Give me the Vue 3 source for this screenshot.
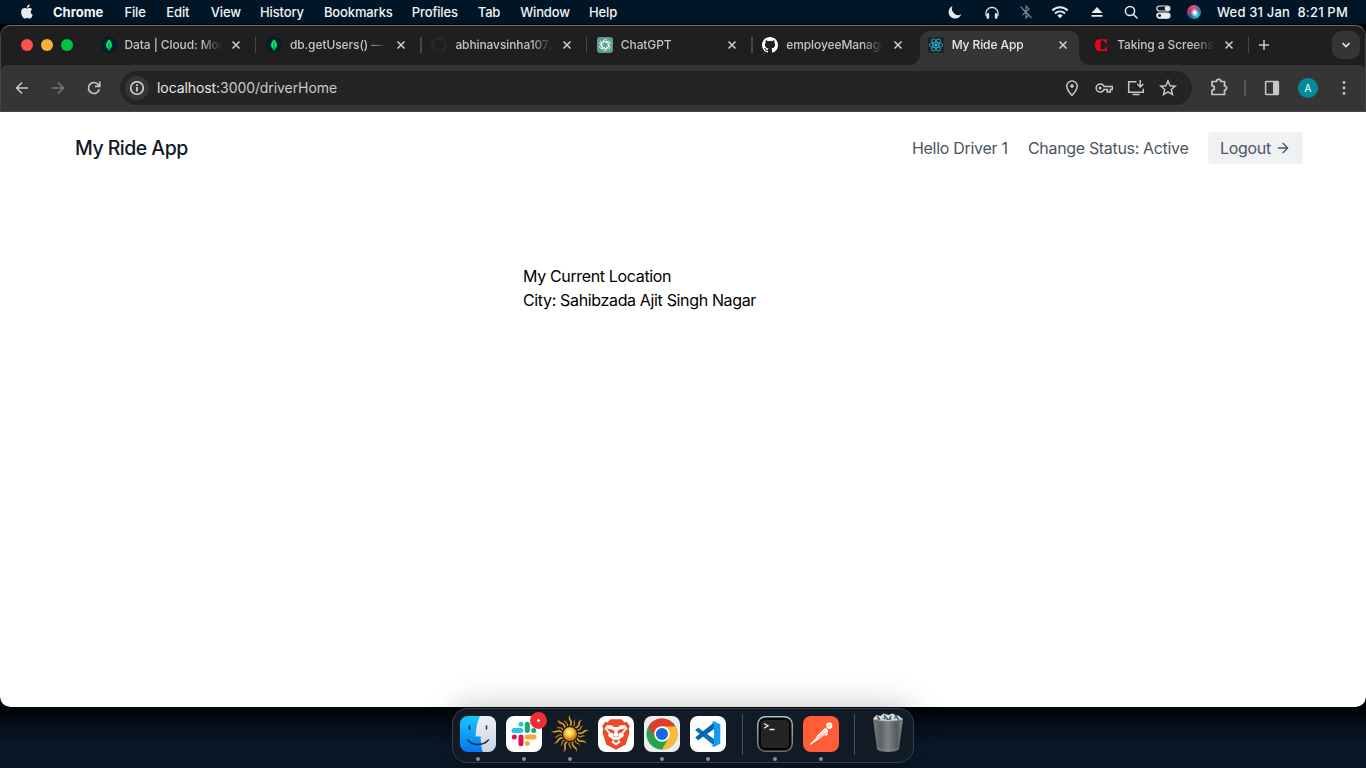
<script setup>
const menu = [
  ['Chrome', 51], ['File', 21.5], ['Edit', 24], ['View', 29], ['History', 43.5], ['Bookmarks', 67.5],
  ['Profiles', 45.5], ['Tab', 22], ['Window', 48.5], ['Help', 28]
]
const tabs = [
  { icon: 'mongo', title: 'Data | Cloud: Mon' },
  { icon: 'mongo', title: 'db.getUsers() —' },
  { icon: 'github', title: 'abhinavsinha107/', dark: true },
  { icon: 'gpt', title: 'ChatGPT' },
  { icon: 'github', title: 'employeeManage' },
  { icon: 'react', title: 'My Ride App', active: true },
  { icon: 'c', title: 'Taking a Screens' }
]
const rays = Array.from({ length: 18 }, (_, i) => i * 20)
const petals = [0, 60, 120, 180, 240, 300]
</script>

<template>
  <div class="desktop">
    <header class="menubar">
      <svg class="apple" viewBox="0 0 24 24"><path d="M18.7 12.7c0-2.5 2-3.7 2.1-3.8-1.200-1.700-3-1.900-3.600-2-1.500-.15-3 .9-3.800.9-.8 0-2-.9-3.300-.9-1.700 0-3.300 1-4.150 2.500-1.800 3.100-.45 7.600 1.250 10.100.85 1.200 1.850 2.600 3.200 2.550 1.300-.05 1.800-.8 3.300-.8 1.550 0 2 .8 3.350.8 1.400 0 2.250-1.250 3.100-2.450 1-1.400 1.350-2.800 1.400-2.850-.05 0-2.800-1.100-2.850-4.050zM16.200 5.300c.7-.85 1.150-2 1-3.200-1 .05-2.200.65-2.900 1.500-.65.75-1.200 1.950-1.050 3.100 1.100.1 2.250-.55 2.950-1.400z" /></svg>
      <nav><span v-for="(m, i) in menu" :key="m[0]" :class="{ bold: i === 0 }" :style="{ width: m[1] + 'px' }">{{ m[0] }}</span></nav>
      <div class="status">
        <svg width="14" height="14" viewBox="0 0 14 14"><path fill="#e6e9ec" d="M4.600 1A6.500 6.500 0 1 0 13.200 9.300 6.300 6.300 0 0 1 4.600 1z" /></svg>
        <svg width="14" height="14" viewBox="0 0 14 14" fill="none" stroke="#dfe3e7" stroke-width="1.200"><path d="M1.700 11.500A6.100 6.100 0 1 1 12.300 11.500" /><path d="M2.900 9.200v3.400M11.100 9.200v3.400" stroke-width="2.600" stroke-linecap="round" /></svg>
        <svg width="12" height="14" viewBox="0 0 12 14" fill="none" stroke="#7b8792" stroke-width="1.100"><path d="M2.500 4l6.500 6-3 3V1l3 3-6.500 6M.5 1.500l11 11.500" /></svg>
        <svg width="18" height="14" viewBox="0 0 18 14" fill="none" stroke="#e9ecef" stroke-width="1.900"><path d="M1.300 5.500a10.800 10.800 0 0 1 15.400 0M4 8.500a7 7 0 0 1 10 0" /><path fill="#e9ecef" stroke="none" d="M9 13.200L6.300 10.500a3.800 3.800 0 0 1 5.400 0z" /></svg>
        <svg width="12" height="12" viewBox="0 0 12 12" fill="#e9ecef"><path d="M6 1l5.500 6H.5zM.5 9h11v1.800H.5z" /></svg>
        <svg width="14" height="14" viewBox="0 0 14 14" fill="none" stroke="#e9ecef" stroke-width="1.500"><circle cx="6" cy="6" r="4.600" /><path d="M9.300 9.300L13 13" stroke-linecap="round" /></svg>
        <svg width="15" height="14" viewBox="0 0 15 14" fill="none" stroke="#e9ecef" stroke-width="1.200"><rect x=".8" y="1" width="13.200" height="5" rx="2.500" /><circle cx="11" cy="3.500" r="1.700" fill="#e9ecef" /><rect x=".8" y="8" width="13.200" height="5.200" rx="2.600" fill="#e9ecef" /><circle cx="3.600" cy="10.600" r="1.500" fill="#10202e" stroke="none" /></svg>
        <i class="siri"></i>
      </div>
      <span class="clock">Wed 31 Jan&nbsp; 8:21 PM</span>
    </header>

    <main class="window">
      <div class="tabstrip">
        <div class="lights"><i></i><i></i><i></i></div>
        <div class="tabs">
          <div v-for="(t, i) in tabs" :key="t.title" class="tab" :class="{ active: t.active, before: i === 4 }">
            <svg class="fav" viewBox="0 0 16 16">
              <g v-if="t.icon === 'mongo'"><circle cx="8" cy="8" r="8" fill="#001e2b" /><path d="M8 2.200c3.700 3.600 3.900 8 .4 10.300V14h-.8v-1.500C4.100 10.200 4.300 5.800 8 2.200z" fill="#00ed64" /><path d="M8 5.500v7.300" stroke="#00874b" stroke-width="1.200" /></g>
              <path v-else-if="t.icon === 'github'" :fill="t.dark ? '#24292f' : '#fff'" d="M8 0C3.580 0 0 3.580 0 8c0 3.540 2.290 6.530 5.470 7.590.4.070.55-.17.55-.38 0-.19-.01-.82-.01-1.490-2.010.37-2.530-.49-2.690-.94-.09-.23-.48-.94-.82-1.130-.28-.15-.68-.52-.01-.53.63-.01 1.080.58 1.230.82.72 1.210 1.870.87 2.330.66.07-.52.28-.87.51-1.070-1.780-.2-3.640-.89-3.640-3.950 0-.87.31-1.590.82-2.150-.08-.2-.36-1.020.08-2.120 0 0 .67-.21 2.200.82a7.600 7.600 0 0 1 4 0c1.530-1.040 2.200-.82 2.200-.82.44 1.100.16 1.920.08 2.120.51.56.82 1.270.82 2.150 0 3.070-1.870 3.750-3.650 3.950.29.25.54.73.54 1.480 0 1.070-.01 1.930-.01 2.200 0 .21.15.46.55.38A8.010 8.010 0 0 0 16 8c0-4.420-3.580-8-8-8z" />
              <g v-else-if="t.icon === 'gpt'"><rect width="16" height="16" rx="3" fill="#5b9f90" /><g fill="none" stroke="#fff" stroke-width=".85"><path v-for="a in petals" :key="a" :transform="`rotate(${a} 8 8)`" d="M6.100 6.900V4.400a2.200 2.200 0 0 1 3.700-1.500M6.100 5.100l2-1.200 3 1.700" /></g></g>
              <g v-else-if="t.icon === 'react'"><rect width="16" height="16" rx="2" fill="#202123" /><g fill="none" stroke="#25a9c4" stroke-width=".9"><ellipse cx="8" cy="8" rx="6.800" ry="2.600" /><ellipse cx="8" cy="8" rx="6.800" ry="2.600" transform="rotate(60 8 8)" /><ellipse cx="8" cy="8" rx="6.800" ry="2.600" transform="rotate(120 8 8)" /></g><circle cx="8" cy="8" r="1.400" fill="#35c5df" /></g>
              <path v-else fill="#f0001f" d="M14 2.200V6.200H12.600Q12 3.500 9.800 3.500H7.600V12.500H9.800Q12 12.500 12.600 10.200H14V14H5Q2 12.500 2 8T5 2.200z" />
            </svg>
            <span class="title">{{ t.title }}</span>
            <svg class="close" viewBox="0 0 10 10"><path d="M1.500 1.500l7 7m0-7l-7 7" /></svg>
          </div>
        </div>
        <svg class="plus" viewBox="0 0 12 12"><path d="M6 1v10M1 6h10" stroke="#c9cac9" stroke-width="1.500" /></svg>
        <div class="chev"><svg width="10" height="8" viewBox="0 0 10 8"><path d="M1.500 2L5 5.500 8.500 2" fill="none" stroke="#e5e5e5" stroke-width="1.700" /></svg></div>
      </div>

      <div class="toolbar">
        <svg class="ic" viewBox="0 0 16 16"><path d="M14 8H2.600M8 2.500L2.500 8 8 13.500" /></svg>
        <svg class="ic dim" viewBox="0 0 16 16"><path d="M2 8h11.400M8 2.500L13.500 8 8 13.500" /></svg>
        <svg class="ic" viewBox="0 0 16 16"><path d="M13.300 9.200A5.500 5.500 0 1 1 12.400 4.700L13.700 6.200M13.800 1.600v4.800H9" /></svg>
        <div class="omnibox">
          <div class="info"><svg width="16" height="16" viewBox="0 0 16 16"><circle cx="8" cy="8" r="6.300" fill="none" stroke="#dedede" stroke-width="1.500" /><path d="M8 7v4.500M8 4.300v1.600" stroke="#dedede" stroke-width="1.600" /></svg></div>
          <span class="url"><b>localhost:</b>3000/driverHome</span>
          <div class="obicons">
            <svg viewBox="0 0 18 18"><path d="M9 16.500C5.500 12.700 3.800 9.700 3.800 7.100a5.200 5.200 0 0 1 10.400 0C14.200 9.700 12.500 12.700 9 16.500z" /><circle cx="9" cy="7" r="1.500" fill="#c7c7c7" stroke="none" /><circle cx="9" cy="7" r="1" /></svg>
            <svg viewBox="0 0 18 18"><path d="M9 7.400A4.100 4.100 0 1 0 9 10.600H12.300V13H15.300V10.600H17.300V7.400z" /><circle cx="5.100" cy="9" r=".8" /></svg>
            <svg viewBox="0 0 18 18"><path d="M9.500 2.700H1.700v10.600h14.600v-3.500M5.500 15.600h7M13.300 1v6.500M10.300 5l3 3 3-3" /></svg>
            <svg viewBox="0 0 18 18"><path d="M9 2l2.050 4.700 5.100.45-3.850 3.400 1.150 5L9 12.900 4.550 15.550l1.150-5-3.850-3.400 5.100-.45z" /></svg>
          </div>
        </div>
        <svg class="puzzle" viewBox="0 0 18 20"><path d="M2 4.500H6.500A2.200 2.200 0 0 1 10.900 4.500H14.500V9A2.100 2.100 0 0 1 14.500 13.200V17.500H2V13.300A2.300 2.300 0 0 0 2 8.700z" /></svg>
        <i class="bar"></i>
        <svg class="side" viewBox="0 0 16 16"><rect x="1.600" y="1.600" width="12.800" height="12.800" rx=".8" fill="none" stroke="#c7c7c7" stroke-width="1.500" /><path d="M9 1.500h5.500v13H9z" fill="#c7c7c7" /></svg>
        <span class="avatar">A</span>
        <svg class="dots" viewBox="0 0 4 16" fill="#c7c7c7"><circle cx="2" cy="2.500" r="1.400" /><circle cx="2" cy="8" r="1.400" /><circle cx="2" cy="13.500" r="1.400" /></svg>
      </div>

      <section class="page">
        <div class="nav">
          <span class="brand">My Ride App</span>
          <div class="links">
            <span class="hello">Hello Driver 1</span>
            <span class="change">Change Status: Active</span>
            <button>Logout<svg width="16" height="16" viewBox="0 0 24 24" fill="none" stroke="currentColor" stroke-width="2" stroke-linecap="round" stroke-linejoin="round"><path d="M5 12h14M12 5l7 7-7 7" /></svg></button>
          </div>
        </div>
        <div class="location">
          <p class="l1">My Current Location</p>
          <p class="l2">City: Sahibzada Ajit Singh Nagar</p>
        </div>
      </section>
    </main>

    <footer class="dock">
      <div class="app run">
        <svg viewBox="0 0 36 36">
          <defs>
            <linearGradient id="fb" x2="0" y2="1"><stop stop-color="#17c6fb" /><stop offset="1" stop-color="#0876ee" /></linearGradient>
            <linearGradient id="fw" x2="0" y2="1"><stop stop-color="#edf0f4" /><stop offset="1" stop-color="#cbd5e0" /></linearGradient>
            <clipPath id="fc"><rect width="36" height="36" rx="8" /></clipPath>
          </defs>
          <g clip-path="url(#fc)"><path fill="url(#fb)" d="M0 0h36v36H0z" /><path fill="url(#fw)" d="M20 0C17 6 15.800 13 15.500 20.500h5.200c0 5 .4 10.500 2 15.500H36V0z" /></g>
          <path d="M9.500 10v3M26.500 10v3M7.500 24c5.500 6 15.500 6 21 0" fill="none" stroke="#17304a" stroke-width="1.500" stroke-linecap="round" />
        </svg>
      </div>
      <div class="app run">
        <svg viewBox="0 0 36 36"><rect width="36" height="36" rx="8" fill="#fff" />
          <g stroke-width="5" stroke-linecap="round" fill="none"><path d="M8 14.500H14.800" stroke="#25c4ed" /><path d="M15 8.300v.01" stroke="#25c4ed" /><path d="M21.300 8.300v6.200" stroke="#16a86c" /><path d="M27.700 14.500v.01" stroke="#16a86c" /><path d="M21.300 21H28" stroke="#f3a83b" /><path d="M21.300 27.500v.01" stroke="#f3a83b" /><path d="M15 21v6.700" stroke="#e0114f" /><path d="M8.300 21v.01" stroke="#e0114f" /></g>
        </svg>
        <i class="badge"></i>
      </div>
      <div class="app run">
        <svg class="sun" viewBox="0 0 40 40">
          <defs><radialGradient id="sg" cx=".45" cy=".4"><stop stop-color="#fff9a8" /><stop offset=".55" stop-color="#f8c83a" /><stop offset="1" stop-color="#c9780f" /></radialGradient></defs>
          <path v-for="(a, i) in rays" :key="a" :transform="`rotate(${a} 20 20)`" :d="i % 2 ? 'M18.900 12.500q2.700-2.700.6-4.600q-1.200-1.500.3-3.400q-.2 2 1.200 3.500q1.400 2.300-.5 4.500z' : 'M18.800 12.500q2.800-3.500.6-6q-1.700-2.500.5-5.800q-.4 3.200 1.300 5.300q2 3-.4 6.500z'" fill="#eaa530" stroke="#3a230b" stroke-width=".2" />
          <circle cx="20" cy="20" r="8.200" fill="#17150e" /><circle cx="20" cy="20" r="7" fill="url(#sg)" />
        </svg>
      </div>
      <div class="app">
        <svg viewBox="0 0 36 36"><rect width="36" height="36" rx="8" fill="#fff" />
          <g transform="translate(18 18.200) scale(1 .96) translate(-18 -18.200)">
            <path d="M12.500 2.600h11l3 3.200 2.500-.3 2.800 4.300-1.100 3 .9 3-3.800 13.200L18 34.500 8.200 29 4.400 15.800l.9-3-1.100-3L7 5.500l2.500.3z" fill="#ee4927" />
            <path d="M9 8.500l5 .6 4 .9 4-.9 5-.6 2.500 3.800-4.200 5.300.6 2.400-5 3.600 1.800 2.900-4.700 3.400-4.700-3.400 1.800-2.900-5-3.600.6-2.400-4.200-5.300z" fill="#fff" />
            <path d="M9 12.300l6.200 1.200 1.200 1.500-.9 5.500 2.500 1 2.500-1-.9-5.500 1.200-1.500 6.200-1.200-3.200 4.200-2.800.8-1 2.300-2 1.700-2-1.700-1-2.300-2.800-.8zM15 25l3-1.300 3 1.300-3 2.200zM14 8.500l4 1.300 4-1.300-1.500 2.300h-5z" fill="#ee4927" />
          </g>
        </svg>
      </div>
      <div class="app run">
        <svg viewBox="0 0 36 36"><rect width="36" height="36" rx="8" fill="#eceded" />
          <circle cx="18" cy="18" r="15.500" fill="#2aa14b" />
          <path d="M31.420 10.250A15.500 15.500 0 0 1 18 33.500L24.700 21.870 18 10.250z" fill="#fdb83b" />
          <path d="M4.580 10.250A15.500 15.500 0 0 1 31.420 10.250H18a7.750 7.750 0 0 0-6.700 11.620z" fill="#e23b2e" />
          <circle cx="18" cy="18" r="7.800" fill="#fff" /><circle cx="18" cy="18" r="6.100" fill="#1769df" />
        </svg>
      </div>
      <div class="app run">
        <svg viewBox="0 0 36 36"><rect width="36" height="36" rx="8" fill="#fff" />
          <path d="M5.200 14.200l2.800-2.600L25.500 24v6.700z" fill="#0873bd" /><path d="M5.200 21.600L8 24.300 25.500 12V5.200z" fill="#0065a9" /><path d="M23.500 5.300L30.300 8.300v19.400l-6.800 3.200-1.500-1.200 2-2V8.500l-2-2z" fill="#159cf0" />
        </svg>
      </div>
      <i class="divider"></i>
      <div class="app run">
        <svg viewBox="0 0 36 36"><defs><linearGradient id="tg" x2="0" y2="1"><stop stop-color="#a9c7cf" /><stop offset="1" stop-color="#686d6e" /></linearGradient></defs><rect width="36" height="36" rx="8.500" fill="url(#tg)" /><rect x="1.500" y="1.500" width="33" height="33" rx="7" fill="#050505" /><rect x="4" y="4" width="28" height="28" rx="4" fill="#242424" /><path d="M7 7.500l4 2.300-4 2.400M12.500 13.500h5" fill="none" stroke="#f4f4f4" stroke-width="1.300" /></svg>
      </div>
      <div class="app run">
        <svg viewBox="0 0 36 36"><rect width="36" height="36" rx="8" fill="#ff5c37" /><circle cx="26.300" cy="9.700" r="3.100" fill="#fff" /><path d="M24.500 10.500l2-.5 1.600-2" stroke="#ff5c37" fill="none" stroke-width=".7" /><path d="M22.500 11.700l2.800 2.800-1 4.500-1.600 1.400-.4-1.900-7 5.300-7.800 5-.8-.6 6.300-6.200 1.300-2.500z" fill="#fff" /><path d="M22.700 14l-8.200 7.800M24 16l-8.500 6.500" stroke="#ff5c37" stroke-width=".6" /></svg>
      </div>
      <i class="divider last"></i>
      <div class="app">
        <svg class="trash" viewBox="0 0 36 42">
          <defs><linearGradient id="bg"><stop stop-color="#777b7d" /><stop offset=".25" stop-color="#5c6163" /><stop offset=".5" stop-color="#7e8284" /><stop offset=".8" stop-color="#53595c" /><stop offset="1" stop-color="#85888a" /></linearGradient></defs>
          <path d="M3.500 6l3-3 4 1 3-2.500 5 1.500 4-1.500 4 2 2 0 4 3.500-2 3H5z" fill="#d7dbdc" />
          <path d="M7 4l3 4m4-5l4 5m3-4l-2 4m6-5l4 5" stroke="#465159" stroke-width="1.500" /><path d="M12 6l4-1-1 3zM25 4l2 2-3 1z" fill="#1e90a0" /><path d="M20 6l2 1-2 1zM8 6l2 2H7z" fill="#a4423a" />
          <path d="M3 7q15 4 30 0l-4 30q-1 3-11 3T7 37z" fill="url(#bg)" /><path d="M3 7q15 4 30 0" fill="none" stroke="#b8bbbc" stroke-width=".7" /><path d="M7.200 36.500q10.800 3.500 21.600 0" fill="none" stroke="#96999b" stroke-width=".6" />
        </svg>
      </div>
    </footer>
  </div>
</template>

<style>
html, body { margin: 0; overflow: hidden; }
</style>

<style scoped>
* { box-sizing: border-box; }
svg { display: block; flex: none; }
.desktop { width: 1366px; height: 768px; overflow: hidden; display: flex; flex-direction: column; font-family: Inter, "Liberation Sans", sans-serif; background: linear-gradient(180deg, #001526 0, #001526 24px, #000 25px, #020508 709px, #05101b 728px, #0a1a2b 750px, #071524 768px); }
.menubar { height: 25px; flex: none; display: flex; align-items: center; color: #f2f4f5; font-size: 13px; font-weight: 500; white-space: pre; border-bottom: 1px solid #000; line-height: 16px; padding-bottom: 1px; }
.apple { width: 18px; height: 17px; margin-left: 17px; fill: #e9ecef; margin-top: -1px; }
nav { display: flex; gap: 20.400px; margin-left: 18px; width: 884px; flex: none; letter-spacing: -.14px; }
nav span { flex: none; }
nav .bold { font-weight: 700; letter-spacing: 0; }
.status { display: grid; grid-template-columns: 37px 37px 31px 37px 37px 31px 33px 29px; place-items: center; margin-left: -.5px; }
.siri { width: 14px; height: 14px; border-radius: 50%; background: radial-gradient(circle at 55% 55%, #fff 8%, transparent 38%), conic-gradient(#e8527b, #2c74b7, #28c7bf, #27619e, #c03576, #e8527b); }
.clock { margin-left: 8.500px; letter-spacing: .19px; }
.window { height: 682px; flex: none; border-radius: 10px; overflow: hidden; display: flex; flex-direction: column; background: #353535; }
.tabstrip { height: 40px; flex: none; background: #1e1f1e; border-top: 1px solid #6c6d6c; border-radius: 10px 10px 0 0; display: flex; align-items: center; border-left: 1px solid #444; border-right: 1px solid #444; }
.lights { display: flex; gap: 8px; width: 89px; padding-left: 20px; padding-bottom: 1px; }
.lights i { width: 12px; height: 12px; border-radius: 50%; background: #ff5052; }
.lights i:nth-child(2) { background: #ffad3b; }
.lights i:nth-child(3) { background: #00c244; }
.tabs { display: flex; align-self: stretch; }
.tab { width: 165.450px; display: flex; align-items: center; padding: 0 0 1px 10.500px; position: relative; }
.tab::after { content: ""; position: absolute; right: -1px; top: 11px; width: 1.500px; height: 16px; background: #454645; }
.tab.before::after, .tab.active::after { display: none; }
.tab.active { z-index: 1; }
.tab.active::before { content: ""; position: absolute; left: 2.500px; right: 3.500px; top: 5px; bottom: 0; background: #353535; border-radius: 9px 9px 0 0; z-index: -1; }
.tab.active::after { display: block; width: auto; background: radial-gradient(circle at 0 0, transparent 9.500px, #353535 10px) 0 0 / 10px 10px no-repeat, radial-gradient(circle at 100% 0, transparent 9.500px, #353535 10px) 100% 0 / 10px 10px no-repeat; height: 10px; left: -7.500px; right: -6px; top: auto; bottom: 0; }
.fav { width: 16px; height: 16px; }
.title { width: 96px; margin-left: 8px; font-size: 12px; font-weight: 500; line-height: 18px; letter-spacing: -.1px; white-space: nowrap; overflow: hidden; color: #c3c5c3; -webkit-mask-image: linear-gradient(90deg, #000 76px, transparent 97px); mask-image: linear-gradient(90deg, #000 76px, transparent 97px); }
.active .title { color: #e9e9e9; }
.close { width: 10px; height: 10px; margin-left: 10.500px; fill: none; stroke: #d0d1d0; stroke-width: 1.500; }
.plus { width: 12px; height: 12px; margin-left: 10px; margin-bottom: 1px; }
.chev { width: 28px; height: 28px; margin-left: 62px; border-radius: 9px; background: #353535; display: grid; place-items: center; margin-bottom: 1px; }
.toolbar { height: 47px; flex: none; display: flex; align-items: center; background: #353535; border-bottom: 1px solid #464646; box-shadow: inset 1px 0 #444, inset -1px 0 #444; padding-left: 14px; }
.tabstrip + .toolbar { background: radial-gradient(circle at 8px 8px, #353535 8px, #1e1f1e 8.500px) 0 0 / 8px 8px no-repeat, radial-gradient(circle at 0 8px, #353535 8px, #1e1f1e 8.500px) 100% 0 / 8px 8px no-repeat, #353535; }
.ic { width: 16px; height: 16px; margin-right: 20px; fill: none; stroke: #c7c7c7; stroke-width: 1.600; }
.dim { stroke: #767676; }
.omnibox { width: 1072px; height: 34px; margin-left: -2px; border-radius: 17px; background: #242424; display: flex; align-items: center; padding-left: 5px; }
.info { width: 24px; height: 24px; border-radius: 50%; background: #353535; display: grid; place-items: center; }
.url { margin-left: 8px; font-size: 14px; line-height: 18px; margin-top: -1px; color: #c9c9c9; letter-spacing: -.08px; }
.url b { font-weight: 400; color: #e7e7e7; }
.obicons { margin-left: auto; display: flex; gap: 14px; padding-right: 15px; }
.obicons svg { width: 18px; height: 18px; fill: none; stroke: #c7c7c7; stroke-width: 1.500; }
.puzzle { width: 18px; height: 20px; margin-left: 18px; margin-top: -2px; fill: none; stroke: #c7c7c7; stroke-width: 1.700; stroke-linejoin: round; }
.bar { width: 1.500px; height: 16px; background: #555; margin-left: 16px; }
.side { width: 16px; height: 16px; margin-left: 18.500px; }
.avatar { width: 20px; height: 20px; margin-left: 18px; border-radius: 50%; background: #008c9b; color: #fff; font-size: 10px; line-height: 20px; text-align: center; }
.dots { width: 4px; height: 16px; margin-left: 24px; }
.page { flex: 1; background: #fff; font-size: 16px; line-height: 24px; overflow: hidden; border-radius: 0 0 10px 10px; }
.nav { height: 72px; display: flex; justify-content: space-between; align-items: center; padding: 0 63px 0 75px; }
.brand { font-size: 19.500px; font-weight: 500; color: #111827; letter-spacing: -.53px; }
.links { display: flex; align-items: center; color: #4b5563; }
.hello { width: 116px; letter-spacing: -.3px; }
.change { width: 180px; letter-spacing: -.33px; }
button { width: 95px; height: 32px; border: 0; padding: 0 0 0 12px; border-radius: 4px; background: #f0f1f3; color: #4b5563; font: 400 16px/24px Inter, sans-serif; letter-spacing: -.3px; display: flex; align-items: center; gap: 4px; }
.location { margin: 80px 0 0 523px; color: #000; letter-spacing: -.35px; }
p { margin: 0; white-space: nowrap; }
.dock { width: 462px; height: 55px; margin: 1px 0 0 452px; flex: none; border: 1px solid #35404a; border-radius: 15px; background: #101b25; box-shadow: 0 0 32px rgba(0, 0, 0, .25); display: flex; gap: 10px; padding: 7px 7px 0; }
.app { width: 36px; height: 36px; position: relative; flex: none; }
.app > svg { width: 36px; height: 36px; }
.app.run::after { content: ""; position: absolute; left: 16px; top: 41px; width: 4px; height: 4px; border-radius: 50%; background: #87909a; }
.badge { position: absolute; right: -5px; top: -4px; width: 17px; height: 17px; border-radius: 50%; background: radial-gradient(circle, #fff 1px, #f02c36 1.500px); }
.app > .sun { width: 40px; height: 40px; margin: -2px; }
.app > .trash { width: 36px; height: 42px; margin-top: -4px; }
.divider { width: 1px; height: 41px; background: #46505a; margin: -2px 4px 0 6px; }
.divider.last { margin-left: 5px; margin-right: 5px; }
</style>
